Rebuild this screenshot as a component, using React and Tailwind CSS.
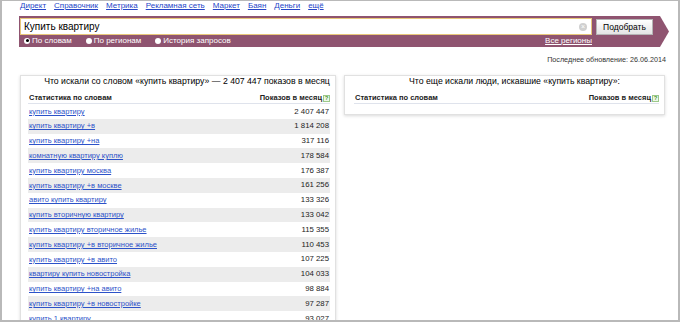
import React from "react";

const navLinks = ["Директ", "Справочник", "Метрика", "Рекламная сеть", "Маркет", "Баян", "Деньги", "ещё"];

const rows = [
  ["купить квартиру", "2 407 447"],
  ["купить квартиру +в", "1 814 208"],
  ["купить квартиру +на", "317 116"],
  ["комнатную квартиру куплю", "178 584"],
  ["купить квартиру москва", "176 387"],
  ["купить квартиру +в москве", "161 256"],
  ["авито купить квартиру", "133 326"],
  ["купить вторичную квартиру", "133 042"],
  ["купить квартиру вторичное жилье", "115 355"],
  ["купить квартиру +в вторичное жилье", "110 453"],
  ["купить квартиру +в авито", "107 225"],
  ["квартиру купить новостройка", "104 033"],
  ["купить квартиру +на авито", "98 884"],
  ["купить квартиру +в новостройке", "97 287"],
  ["купить 1 квартиру", "93 027"],
];

const HelpIcon = () => (
  <span className="ml-[1px] inline-flex h-[7px] w-[7px] items-center justify-center border border-[#9cc98a] bg-[#eef7e8] text-[6px] leading-none font-bold text-[#4a9a35]">
    ?
  </span>
);

const Radio = ({ checked, label }) => (
  <label className="flex items-center gap-[2px]">
    <span className="flex h-[6px] w-[6px] items-center justify-center rounded-full bg-white">
      {checked && <span className="h-[3px] w-[3px] rounded-full bg-black" />}
    </span>
    <span>{label}</span>
  </label>
);

const TableHead = () => (
  <div className="mt-[7px] flex h-[11px] items-center justify-between border-b border-[#dfe3ec] text-[7.5px] leading-[10px] font-bold text-[#222]">
    <span className="pl-[1px]">Статистика по словам</span>
    <span className="flex items-center">
      Показов в месяц
      <HelpIcon />
    </span>
  </div>
);

export default function App() {
  return (
    <div
      className="h-[322px] w-[680px] overflow-hidden border-x-2 border-t border-b-2 border-[#b9b9b9] bg-white text-[#222]"
      style={{ fontFamily: '"Liberation Sans", Arial, sans-serif' }}
    >
      {/* top links */}
      <nav className="flex h-[15px] gap-[8px] pl-[18px] text-[8px] leading-[10px]">
        {navLinks.map((l) => (
          <a key={l} href="#" className="text-[#2546c8] underline">
            {l}
          </a>
        ))}
      </nav>

      {/* search bar */}
      <div
        className="ml-[17px] flex h-[31px] w-[650px] flex-col bg-[#8f5470] pt-[2px] pl-[1px]"
        style={{ clipPath: "polygon(0 0, calc(100% - 9px) 0, 100% 50%, calc(100% - 9px) 100%, 0 100%)" }}
      >
        <div className="flex items-start">
          <div className="flex h-[17px] w-[572px] items-center justify-between border border-[#e8c77a] bg-white pr-[4px] pl-[3px]">
            <span className="text-[10px] leading-none text-black">Купить квартиру</span>
            <span className="flex h-[8px] w-[8px] items-center justify-center rounded-full bg-[#d0d0d0] text-[7px] leading-none text-white">
              ×
            </span>
          </div>
          <button className="mt-[1px] ml-[4px] h-[16px] w-[57px] border border-[#b5b5b5] bg-gradient-to-b from-white to-[#e4e4e4] text-[8.5px] leading-none text-black">
            Подобрать
          </button>
        </div>
        <div className="flex h-[11px] w-[572px] items-center justify-between pl-[4px] text-[8px] leading-none text-white">
          <div className="flex items-center gap-[14px]">
            <Radio checked label="По словам" />
            <Radio label="По регионам" />
            <Radio label="История запросов" />
          </div>
          <a href="#" className="underline">
            Все регионы
          </a>
        </div>
      </div>

      {/* last update */}
      <div className="mt-[8px] pr-[12px] text-right text-[7.2px] leading-[10px] text-[#333]">
        Последнее обновление: 26.06.2014
      </div>

      {/* panels */}
      <div className="mt-[10px] ml-[18px] flex items-start gap-[8px]">
        <div className="w-[316px] border border-[#e1e1e1] pr-[5px] pb-[2px] pl-[7px] shadow-[0_1px_3px_rgba(0,0,0,0.15)]">
          <div className="pl-[16px] text-center text-[8.7px] leading-[10px] whitespace-nowrap text-black">
            Что искали со словом «купить квартиру» — 2 407 447 показов в месяц
          </div>
          <TableHead />
          {rows.map(([q, n], i) => (
            <div
              key={q}
              className={`flex h-[14.8px] items-center justify-between px-[1px] text-[7.5px] leading-none ${
                i % 2 === 1 ? "bg-[#ececec]" : ""
              }`}
            >
              <a href="#" className="text-[#2c52c9] underline">
                {q}
              </a>
              <span className="text-[7.8px] text-[#222]">{n}</span>
            </div>
          ))}
        </div>

        <div className="w-[321px] border border-[#e1e1e1] pr-[5px] pb-[10px] pl-[9px] shadow-[0_1px_3px_rgba(0,0,0,0.15)]">
          <div className="pl-[16px] text-center text-[8.7px] leading-[10px] whitespace-nowrap text-black">
            Что еще искали люди, искавшие «купить квартиру»:
          </div>
          <TableHead />
        </div>
      </div>
    </div>
  );
}
